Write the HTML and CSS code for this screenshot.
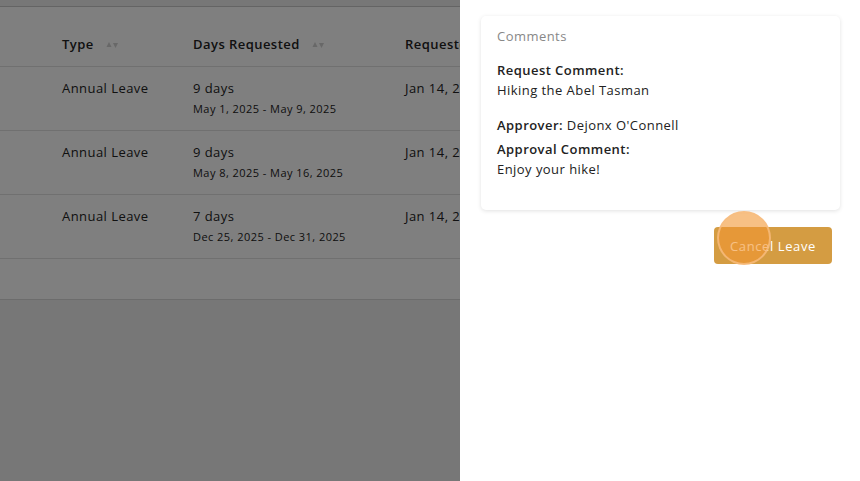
FILE: index.html
```html
<!DOCTYPE html>
<html lang="en">
<head>
    <meta charset="UTF-8">
    <meta name="viewport" content="width=device-width, initial-scale=1.0">
    <title>My Leave</title>
    <link rel="stylesheet" href="styles.css">
</head>
<body>
    <div class="page">
        <div class="table-card">
            <div class="row head">
                <div class="cell"></div>
                <div class="cell">Type <span class="sort"><svg width="12" height="8" viewBox="0 0 12 8"><path d="M3 1 L5.5 6 L0.5 6 Z" fill="#d0d0d0"/><path d="M7 2 L12 2 L9.5 7 Z" fill="#d0d0d0"/></svg></span></div>
                <div class="cell">Days Requested <span class="sort"><svg width="12" height="8" viewBox="0 0 12 8"><path d="M3 1 L5.5 6 L0.5 6 Z" fill="#d0d0d0"/><path d="M7 2 L12 2 L9.5 7 Z" fill="#d0d0d0"/></svg></span></div>
                <div class="cell">Requested On</div>
            </div>
            <div class="row">
                <div class="cell"></div>
                <div class="cell">Annual Leave</div>
                <div class="cell">9 days<div class="dates">May 1, 2025 - May 9, 2025</div></div>
                <div class="cell">Jan 14, 2025</div>
            </div>
            <div class="row">
                <div class="cell"></div>
                <div class="cell">Annual Leave</div>
                <div class="cell">9 days<div class="dates">May 8, 2025 - May 16, 2025</div></div>
                <div class="cell">Jan 14, 2025</div>
            </div>
            <div class="row">
                <div class="cell"></div>
                <div class="cell">Annual Leave</div>
                <div class="cell">7 days<div class="dates">Dec 25, 2025 - Dec 31, 2025</div></div>
                <div class="cell">Jan 14, 2025</div>
            </div>
            <div class="table-foot"></div>
        </div>
    </div>

    <div class="overlay"></div>

    <div class="drawer">
        <div class="comments">
            <div class="comments-title">Comments</div>
            <div class="label">Request Comment:</div>
            <div class="text">Hiking the Abel Tasman</div>
            <div class="approver"><span class="label">Approver:</span> Dejonx O'Connell</div>
            <div class="label">Approval Comment:</div>
            <div class="text">Enjoy your hike!</div>
        </div>
        <div class="actions">
            <button class="cancel-button">Cancel Leave</button>
            <span class="click-dot"></span>
        </div>
    </div>
</body>
</html>
```

FILE: styles.css
```css
body {
    font-family: "Open Sans", "Liberation Sans", sans-serif;
    margin: 0;
    background-color: #eeeeee;
    color: #222;
    font-size: 13px;
    letter-spacing: 0.45px;
    height: 481px;
    overflow: hidden;
}
.page {
    padding-top: 6px;
}
.table-card {
    background-color: white;
    border-top: 1px solid #c8c8c8;
    border-bottom: 1px solid #d8d8d8;
}
.row {
    display: grid;
    grid-template-columns: 62px 131px 212px 1fr;
    height: 63px;
    border-bottom: 1px solid #e0e0e0;
    box-sizing: content-box;
}
.row .cell {
    padding-top: 11px;
    line-height: 20px;
}
.row.head {
    height: 59px;
    font-weight: 600;
}
.row.head .cell {
    padding-top: 27px;
}
.sort {
    margin-left: 8px;
}
.dates {
    font-size: 11px;
    line-height: 18px;
    margin-top: 2px;
}
.table-foot {
    height: 40px;
}
.overlay {
    position: fixed;
    top: 0;
    left: 0;
    right: 0;
    bottom: 0;
    background-color: rgba(0, 0, 0, 0.5);
}
.drawer {
    position: fixed;
    top: 0;
    right: 0;
    bottom: 0;
    width: 400px;
    background-color: white;
    padding: 16px 20px 0 21px;
    box-sizing: border-box;
}
.comments {
    border-radius: 5px;
    box-shadow: 0 1px 4px rgba(0, 0, 0, 0.12);
    padding: 10px 16px 31px;
    line-height: 20px;
}
.comments-title {
    color: #888;
    margin-bottom: 14px;
}
.label {
    font-weight: 600;
}
.approver {
    margin-top: 15px;
    margin-bottom: 4px;
}
.actions {
    position: relative;
    display: flex;
    justify-content: flex-end;
    padding: 17px 8px 0 0;
}
.cancel-button {
    font-family: inherit;
    font-size: 13px;
    letter-spacing: 0.6px;
    background-color: #d49c42;
    color: white;
    border: none;
    border-radius: 4px;
    width: 118px;
    height: 37px;
}
.click-dot {
    position: absolute;
    left: 236px;
    top: 1px;
    width: 54px;
    height: 54px;
    border-radius: 50%;
    background-color: rgba(242, 150, 50, 0.6);
    border: 2px solid rgba(248, 190, 130, 0.8);
    box-sizing: border-box;
}
```
